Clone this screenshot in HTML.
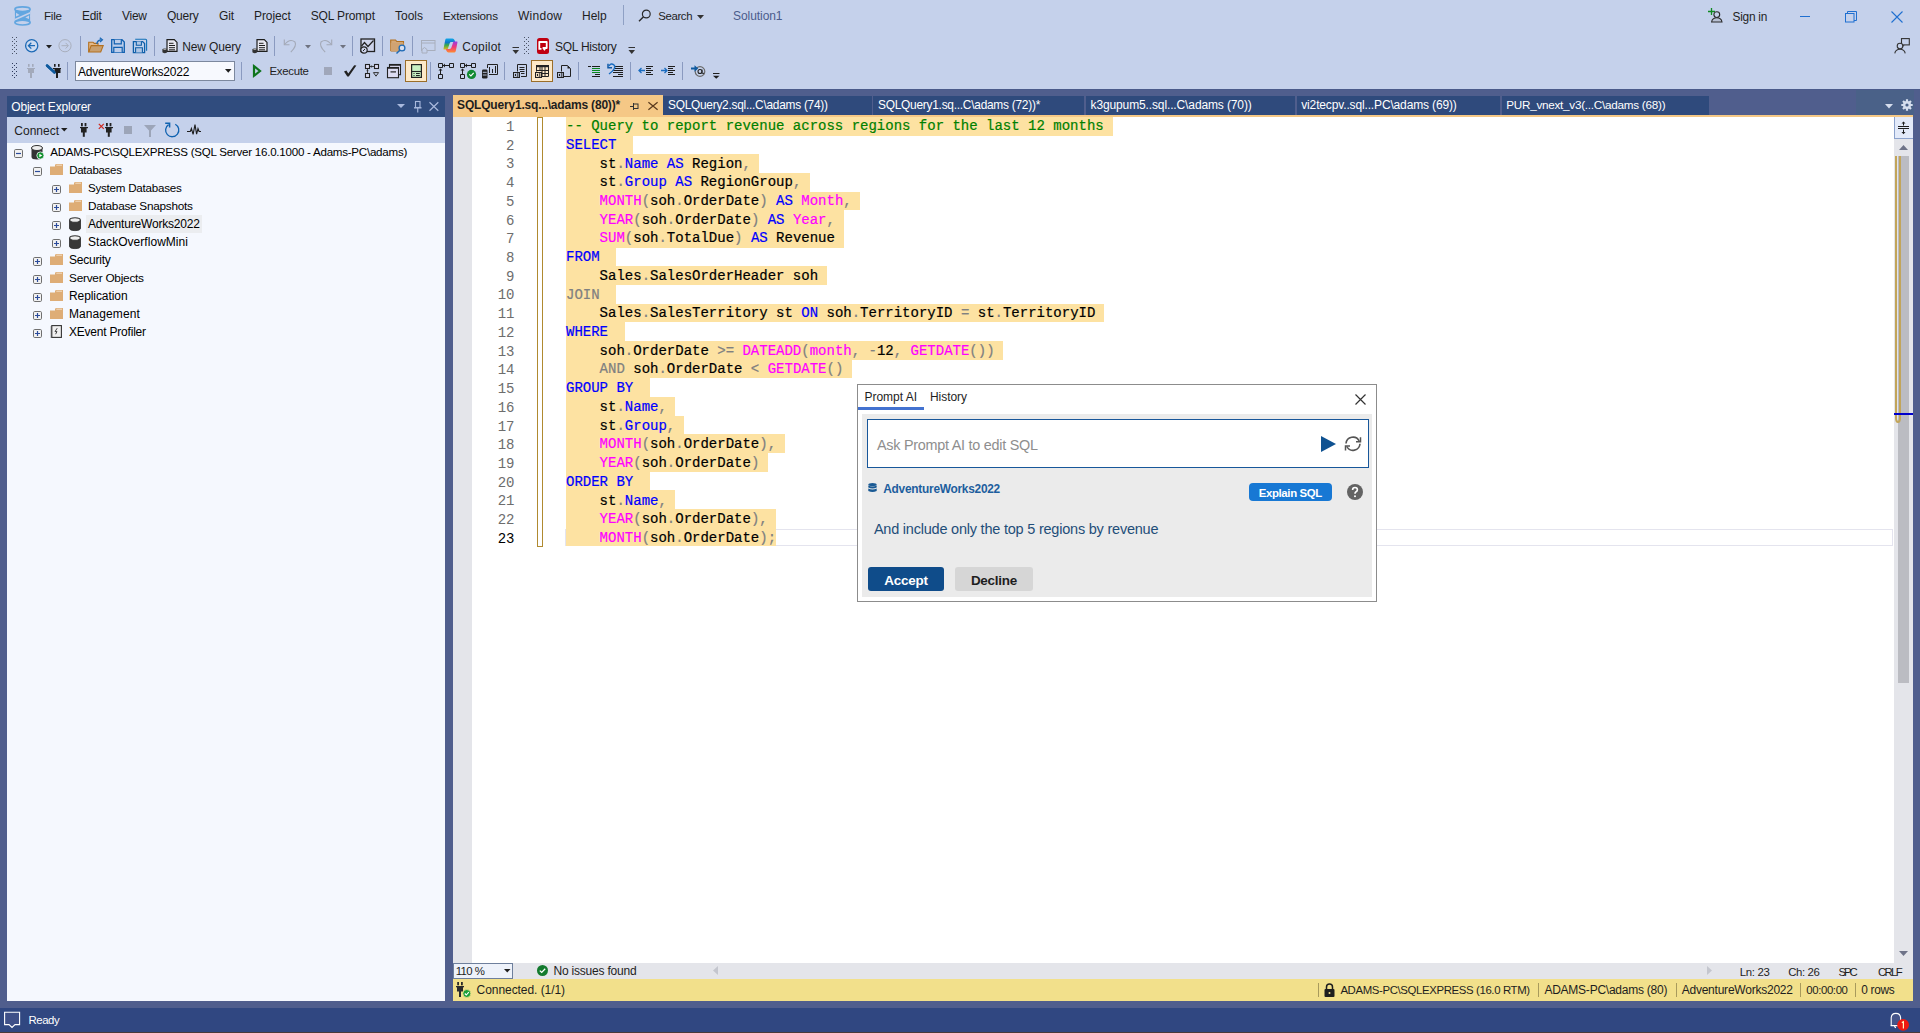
<!DOCTYPE html>
<html><head><meta charset="utf-8">
<style>
*{margin:0;padding:0;box-sizing:border-box}
html,body{width:1920px;height:1033px;overflow:hidden}
body{position:relative;background:#C5D1EB;font-family:"Liberation Sans",sans-serif;font-size:11.3px;color:#1E1E1E}
.a{position:absolute}
.t{position:absolute;white-space:nowrap;height:20px;line-height:20px}
svg{position:absolute;overflow:visible}
.code{position:absolute;left:566px;font-family:"Liberation Mono",monospace;font-size:14px;white-space:pre;-webkit-text-stroke:0.2px currentColor;height:18.69px;line-height:18.69px;color:#000}
.hl{background:#FDE2A2}
.k{color:#0000FF}.f{color:#FF00FF}.o{color:#808080}.c{color:#008000}
.ln{position:absolute;width:40px;left:474.5px;margin-top:0.9px;text-align:right;font-family:"Liberation Mono",monospace;font-size:14px;height:18.69px;line-height:18.69px;color:#6D6D6D}
.row{position:absolute;height:20px;line-height:20px;white-space:nowrap;font-size:11.2px;color:#000}
.sep{position:absolute;width:1px;background:#8A9AC0}
</style></head>
<body>
<!-- frame -->
<div class="a" style="left:0;top:89px;width:1920px;height:1px;background:#4A5A8A"></div>
<div class="a" style="left:0;top:90px;width:1920px;height:918px;background:#505E8D"></div>
<div class="a" style="left:0;top:1008px;width:1920px;height:25px;background:#304781"></div>

<!-- Object Explorer -->
<div class="a" style="left:7px;top:96px;width:438px;height:21px;background:#304C7E"></div>
<div class="a" style="left:7px;top:117px;width:438px;height:26px;background:#C5D1EB"></div>
<div class="a" style="left:7px;top:143px;width:438px;height:858px;background:#F5F8FE"></div>

<!-- Editor -->
<div class="a" style="left:453px;top:115px;width:1460px;height:2px;background:#F5C886"></div>
<div class="a" style="left:453px;top:117px;width:1460px;height:846px;background:#FFFFFF"></div>
<div class="a" style="left:453px;top:117px;width:19px;height:846px;background:#E4E5EA"></div>
<div class="a" style="left:453px;top:963px;width:1460px;height:16px;background:#E4E5EA"></div>
<div class="a" style="left:453px;top:979px;width:1460px;height:22px;background:#F2E08B"></div>

<!-- Tabs -->
<div class="a" style="left:453px;top:95px;width:210px;height:22px;background:#F5C886"></div>
<div class="a" style="left:663px;top:96px;width:209px;height:19px;background:#2F4A7C"></div>
<div class="a" style="left:873px;top:96px;width:211px;height:19px;background:#2F4A7C"></div>
<div class="a" style="left:1086px;top:96px;width:209px;height:19px;background:#2F4A7C"></div>
<div class="a" style="left:1297px;top:96px;width:203px;height:19px;background:#2F4A7C"></div>
<div class="a" style="left:1502px;top:96px;width:207px;height:19px;background:#2F4A7C"></div>
<div class="a" style="left:1856px;top:90px;width:58px;height:25px;background:#4A6188"></div>
<!-- ===== MENU BAR ===== -->
<svg style="left:14px;top:6px" width="17" height="20" viewBox="0 0 17 20"><path d="M0.9 3.2V16.6A7.6 2.4 0 0 0 16.1 16.6V3.2Z" fill="#62A6E0"/><ellipse cx="8.5" cy="3.2" rx="7.6" ry="2.4" fill="#C5D1EB" stroke="#62A6E0" stroke-width="1.7"/><ellipse cx="8.5" cy="16.6" rx="7.6" ry="2.4" fill="#C5D1EB" stroke="#62A6E0" stroke-width="1.7"/><path d="M0.9 12.8L16.1 5.9V7.7L0.9 14.6Z" fill="#C5D1EB"/><path d="M2 6.8L5.6 9L2 10.6Z" fill="#C5D1EB"/><path d="M15 9.6L11.4 11.4L15 12.9Z" fill="#C5D1EB"/><path d="M-0.2 9.2L1.4 10.1L-0.2 11ZM17.2 9.2L15.6 10.1L17.2 11Z" fill="#C5D1EB"/></svg>
<div class="t" style="left:44.00px;top:5.95px;font-size:11.66px;letter-spacing:-0.267px">File</div>
<div class="t" style="left:82.00px;top:5.87px;font-size:11.88px;letter-spacing:-0.250px">Edit</div>
<div class="t" style="left:122.00px;top:5.84px;font-size:11.98px;letter-spacing:-0.267px">View</div>
<div class="t" style="left:167.00px;top:5.83px;font-size:12px;letter-spacing:-0.238px">Query</div>
<div class="t" style="left:219.00px;top:5.83px;font-size:12px;letter-spacing:-0.150px">Git</div>
<div class="t" style="left:254.00px;top:5.83px;font-size:12px;letter-spacing:-0.092px">Project</div>
<div class="t" style="left:310.75px;top:5.83px;font-size:12px;letter-spacing:-0.150px">SQL Prompt</div>
<div class="t" style="left:395.00px;top:5.83px;font-size:12px;letter-spacing:0.000px">Tools</div>
<div class="t" style="left:443.00px;top:5.93px;font-size:11.7px;letter-spacing:-0.244px">Extensions</div>
<div class="t" style="left:518.00px;top:5.83px;font-size:12px;letter-spacing:0.260px">Window</div>
<div class="t" style="left:582.00px;top:5.83px;font-size:12px;letter-spacing:0.017px">Help</div>
<div class="sep" style="left:623px;top:5px;height:20px;background:#8FA0C4"></div>
<svg style="left:638px;top:9px" width="14" height="13" viewBox="0 0 14 13"><circle cx="8.3" cy="5" r="3.9" fill="none" stroke="#2A2A2A" stroke-width="1.2"/><path d="M5.5 7.8L1 12.3" stroke="#2A2A2A" stroke-width="1.4"/></svg>
<div class="t" style="left:658.25px;top:6.03px;font-size:11.4px;letter-spacing:-0.370px">Search</div>
<svg style="left:697px;top:15px" width="7" height="4" viewBox="0 0 7 4"><path d="M0 0H7L3.5 4Z" fill="#333"/></svg>
<div class="t" style="left:733.00px;top:5.83px;font-size:12px;letter-spacing:-0.062px;color:#4B5C8C">Solution1</div>
<svg style="left:1707px;top:7px" width="16" height="16" viewBox="0 0 16 16"><path d="M4.5 1V8M1 4.5H8" stroke="#108A22" stroke-width="1.3"/><circle cx="9.8" cy="7.6" r="2.9" fill="#C5D1EB" stroke="#2A2A2A" stroke-width="1.1"/><path d="M4.6 15Q5.3 10.8 9.8 10.8Q14.3 10.8 15 15Z" fill="#B8C0D4" stroke="#2A2A2A" stroke-width="1.1"/></svg>
<div class="t" style="left:1732.50px;top:6.88px;font-size:11.87px;letter-spacing:-0.250px">Sign in</div>
<div class="a" style="left:1800px;top:16px;width:10px;height:1px;background:#1F6FD0"></div>
<svg style="left:1845px;top:11px" width="12" height="12" viewBox="0 0 12 12"><rect x="0.5" y="2.5" width="8.5" height="8.5" fill="none" stroke="#1F6FD0" stroke-width="1"/><path d="M2.5 2.5V0.5H11.5V9.5H9" fill="none" stroke="#1F6FD0" stroke-width="1"/></svg>
<svg style="left:1891px;top:11px" width="12" height="12" viewBox="0 0 12 12"><path d="M0.5 0.5L11.5 11.5M11.5 0.5L0.5 11.5" stroke="#1F6FD0" stroke-width="1.1"/></svg>

<!-- ===== TOOLBAR 1 ===== -->
<svg style="left:12px;top:37px" width="6" height="17" viewBox="0 0 6 17" fill="#4A5366"><rect x="0" y="0" width="1" height="1"/><rect x="4" y="0" width="1" height="1"/><rect x="2" y="2" width="1" height="1"/><rect x="0" y="4" width="1" height="1"/><rect x="4" y="4" width="1" height="1"/><rect x="2" y="6" width="1" height="1"/><rect x="0" y="8" width="1" height="1"/><rect x="4" y="8" width="1" height="1"/><rect x="2" y="10" width="1" height="1"/><rect x="0" y="12" width="1" height="1"/><rect x="4" y="12" width="1" height="1"/><rect x="2" y="14" width="1" height="1"/><rect x="0" y="16" width="1" height="1"/><rect x="4" y="16" width="1" height="1"/></svg>
<svg style="left:25px;top:39px" width="14" height="14" viewBox="0 0 14 14"><circle cx="6.7" cy="6.7" r="6.1" fill="#CCDAF0" stroke="#1D6AB6" stroke-width="1.3"/><path d="M10 6.7H3.5M6.3 3.8L3.4 6.7L6.3 9.6" fill="none" stroke="#1D6AB6" stroke-width="1.3"/></svg>
<svg style="left:46px;top:45px" width="7" height="4" viewBox="0 0 7 4"><path d="M0 0H6L3 3.5Z" fill="#1E1E1E"/></svg>
<svg style="left:58px;top:39px" width="14" height="14" viewBox="0 0 14 14"><circle cx="7" cy="6.7" r="6.1" fill="none" stroke="#A9AFBD" stroke-width="1"/><path d="M3.5 6.7H10M7.6 3.9L10.4 6.7L7.6 9.5" fill="none" stroke="#A9AFBD" stroke-width="1"/></svg>
<div class="sep" style="left:80px;top:36px;height:20px"></div>
<svg style="left:88px;top:37px" width="16" height="16" viewBox="0 0 16 16"><path d="M0.7 15V5.2H5L6.2 6.4H10V8.5" fill="#E2B98A" stroke="#B3701F" stroke-width="1.1"/><path d="M0.7 15L3.2 8.6H15.2L12.7 15Z" fill="#C8A070" stroke="#B3701F" stroke-width="1.1"/><path d="M8.8 7Q9.5 3 13.5 2.8" fill="none" stroke="#1D6AB6" stroke-width="1.4"/><path d="M11.8 0.8L14.4 2.8L12 5" fill="none" stroke="#1D6AB6" stroke-width="1.3"/></svg>
<svg style="left:111px;top:39px" width="14" height="14" viewBox="0 0 14 14"><path d="M0.7 0.7H11L13.3 3V13.3H0.7Z" fill="#BCCDEA" stroke="#1060B0" stroke-width="1.3"/><path d="M3.3 0.7V4.8H10.3V0.7" fill="#BCCDEA" stroke="#1060B0" stroke-width="1.2"/><path d="M2.8 13.3V8.3H11.2V13.3" fill="#BCCDEA" stroke="#1060B0" stroke-width="1.2"/></svg>
<svg style="left:132px;top:38px" width="16" height="16" viewBox="0 0 16 16"><path d="M3.2 1.3H13.6Q14.6 1.3 14.6 2.3V12.8" fill="none" stroke="#1170B8" stroke-width="1.1"/><path d="M1.4 3.6H10.6L12.6 5.6V14.6H1.4Z" fill="#C2D2EC" stroke="#0E5EA8" stroke-width="1.3"/><path d="M4.3 3.6V7.3H9.4V3.6M3.6 14.6V9.8H10.4V14.6" fill="#B0C7E6" stroke="#0E5EA8" stroke-width="1.1"/></svg>
<div class="sep" style="left:154px;top:36px;height:20px"></div>
<svg style="left:162px;top:39px" width="16" height="15" viewBox="0 0 16 15"><path d="M5 0.7H12.3L15 3.4V12.3H5Z" fill="#E8E8F0" stroke="#1E1E1E" stroke-width="1.2"/><path d="M7 4.3H11.5M7 6.5H13M7 8.7H13M7 10.8H13" stroke="#1E1E1E" stroke-width="1"/><ellipse cx="2.8" cy="10.6" rx="2.4" ry="1.2" fill="#333"/><path d="M0.4 10.6V13.3Q2.8 15 5.2 13.3V10.6" fill="#333"/><ellipse cx="2.8" cy="10.3" rx="1.6" ry="0.6" fill="#AAA"/></svg>
<div class="t" style="left:182.25px;top:36.63px;font-size:12px;letter-spacing:-0.156px">New Query</div>
<svg style="left:252px;top:39px" width="16" height="15" viewBox="0 0 16 15"><path d="M5 0.7H12.3L15 3.4V12.3H5Z" fill="#E8E8F0" stroke="#1E1E1E" stroke-width="1.2"/><path d="M7 4.3H11.5M7 6.5H13M7 8.7H13M7 10.8H13" stroke="#1E1E1E" stroke-width="1"/><ellipse cx="2.8" cy="10.6" rx="2.4" ry="1.2" fill="#333"/><path d="M0.4 10.6V13.3Q2.8 15 5.2 13.3V10.6" fill="#333"/><ellipse cx="2.8" cy="10.3" rx="1.6" ry="0.6" fill="#AAA"/></svg>
<div class="sep" style="left:274px;top:36px;height:20px"></div>
<svg style="left:283px;top:38px" width="14" height="15" viewBox="0 0 14 15"><path d="M1.5 6.5Q7 0 12 4Q14 8 7.8 14.2" fill="none" stroke="#A3A9B7" stroke-width="1.1"/><path d="M1.3 1.5V6.8H6.5" fill="none" stroke="#A3A9B7" stroke-width="1.1"/></svg>
<svg style="left:305px;top:45px" width="7" height="4" viewBox="0 0 7 4"><path d="M0 0H6L3 3.5Z" fill="#6F7380"/></svg>
<svg style="left:319px;top:38px" width="14" height="15" viewBox="0 0 14 15"><path d="M12.5 6.5Q7 0 2 4Q0 8 6.2 14.2" fill="none" stroke="#A3A9B7" stroke-width="1.1"/><path d="M12.7 1.5V6.8H7.5" fill="none" stroke="#A3A9B7" stroke-width="1.1"/></svg>
<svg style="left:340px;top:45px" width="7" height="4" viewBox="0 0 7 4"><path d="M0 0H6L3 3.5Z" fill="#6F7380"/></svg>
<div class="sep" style="left:352px;top:36px;height:20px"></div>
<svg style="left:360px;top:38px" width="16" height="16" viewBox="0 0 16 16"><rect x="1" y="1" width="13.5" height="12.5" fill="#CDD3EA" stroke="#222" stroke-width="1.3"/><path d="M1.5 8L4.5 4.5L8 8.5L13.5 2.5" fill="none" stroke="#222" stroke-width="1.2"/><circle cx="4" cy="12" r="3.2" fill="#CDD3EA" stroke="#222" stroke-width="1.2"/><path d="M3 13L5 11" stroke="#222" stroke-width="1"/></svg>
<div class="sep" style="left:382px;top:36px;height:20px"></div>
<svg style="left:390px;top:39px" width="17" height="15" viewBox="0 0 17 15"><path d="M0.7 12V1H5.5L6.8 2.5H13.5V8" fill="#D4A877" stroke="#B3701F" stroke-width="1.1"/><path d="M0.7 12H9V4.5H13.5" fill="#D4A877" stroke="#B3701F" stroke-width="1.1"/><rect x="0.7" y="3.8" width="12.8" height="8.2" fill="#D0A372"/><circle cx="12" cy="9" r="2.9" fill="#D8DEEE" stroke="#1D6AB6" stroke-width="1.3"/><path d="M9.8 11.3L6.5 14.5" stroke="#1D6AB6" stroke-width="1.5"/></svg>
<div class="sep" style="left:412px;top:36px;height:20px"></div>
<svg style="left:421px;top:40px" width="15" height="14" viewBox="0 0 15 14"><rect x="0.5" y="0.5" width="13.5" height="10" fill="none" stroke="#A8AEBC" stroke-width="1"/><path d="M0.5 3H14" stroke="#A8AEBC" stroke-width="1"/><path d="M1 13V9.5L3.5 7.5L6 9.5V13Z" fill="#C5D1EB" stroke="#A8AEBC" stroke-width="1"/></svg>
<svg style="left:443px;top:38px" width="15" height="15" viewBox="0 0 15 15"><defs><linearGradient id="cpa" x1="0" y1="0" x2="0" y2="1"><stop offset="0" stop-color="#11A6E8"/><stop offset="0.35" stop-color="#0E78C8"/><stop offset="0.6" stop-color="#3AAA48"/><stop offset="1" stop-color="#E8B820"/></linearGradient><linearGradient id="cpb" x1="0" y1="0" x2="0" y2="1"><stop offset="0" stop-color="#9C3CE0"/><stop offset="0.5" stop-color="#F03A78"/><stop offset="1" stop-color="#FF8A30"/></linearGradient></defs><path d="M3.5 0.6H9.5Q11 0.6 11.6 2.2L12.2 4H8.2Q7 4 6.6 5.4L4.6 11.6H1.2Q0.2 11.6 0.6 10.4L2.2 2Q2.6 0.6 3.5 0.6Z" fill="url(#cpa)"/><path d="M11.5 14.4H5.5Q4 14.4 3.4 12.8L2.8 11H6.8Q8 11 8.4 9.6L10.4 3.6H13.8Q14.8 3.6 14.4 4.8L12.8 13Q12.4 14.4 11.5 14.4Z" fill="url(#cpb)"/></svg>
<div class="t" style="left:462.30px;top:36.73px;font-size:12px;letter-spacing:0.217px">Copilot</div>
<svg style="left:512px;top:47px" width="8" height="8" viewBox="0 0 8 8"><path d="M0.5 0.5H7" stroke="#333" stroke-width="1"/><path d="M0.5 3H7L3.75 7Z" fill="#333"/></svg>
<svg style="left:524px;top:37px" width="6" height="17" viewBox="0 0 6 17" fill="#4A5366"><rect x="0" y="0" width="1" height="1"/><rect x="4" y="0" width="1" height="1"/><rect x="2" y="2" width="1" height="1"/><rect x="0" y="4" width="1" height="1"/><rect x="4" y="4" width="1" height="1"/><rect x="2" y="6" width="1" height="1"/><rect x="0" y="8" width="1" height="1"/><rect x="4" y="8" width="1" height="1"/><rect x="2" y="10" width="1" height="1"/><rect x="0" y="12" width="1" height="1"/><rect x="4" y="12" width="1" height="1"/><rect x="2" y="14" width="1" height="1"/><rect x="0" y="16" width="1" height="1"/><rect x="4" y="16" width="1" height="1"/></svg>
<svg style="left:537px;top:38px" width="12" height="16" viewBox="0 0 12 16"><rect x="0" y="0" width="12" height="16" rx="2.5" fill="#C00010"/><path d="M2.3 4H9.7V10H6.3L8 12.3" fill="none" stroke="#fff" stroke-width="1.8" stroke-linejoin="round"/><path d="M2.3 3.2V10.8H4.5" fill="none" stroke="#fff" stroke-width="1.8"/></svg>
<div class="t" style="left:555.00px;top:36.73px;font-size:12px;letter-spacing:-0.250px">SQL History</div>
<svg style="left:628px;top:47px" width="8" height="8" viewBox="0 0 8 8"><path d="M0.5 0.5H7" stroke="#333" stroke-width="1"/><path d="M0.5 3H7L3.75 7Z" fill="#333"/></svg>
<svg style="left:1894px;top:38px" width="16" height="16" viewBox="0 0 16 16"><rect x="7.5" y="0.6" width="7.8" height="6.3" fill="none" stroke="#333" stroke-width="1.1"/><path d="M10 6.9L9.2 8.5" stroke="#333" stroke-width="1"/><circle cx="6" cy="8" r="2.8" fill="#C5D1EB" stroke="#333" stroke-width="1.1"/><path d="M0.8 15.3Q1.5 11.2 6 11.2Q10.5 11.2 11.2 15.3" fill="none" stroke="#333" stroke-width="1.1"/></svg>

<!-- ===== TOOLBAR 2 ===== -->
<svg style="left:12px;top:63px" width="6" height="15" viewBox="0 0 6 15" fill="#2D3A5C"><rect x="0" y="0" width="1" height="1"/><rect x="4" y="0" width="1" height="1"/><rect x="2" y="2" width="1" height="1"/><rect x="0" y="4" width="1" height="1"/><rect x="4" y="4" width="1" height="1"/><rect x="2" y="6" width="1" height="1"/><rect x="0" y="8" width="1" height="1"/><rect x="4" y="8" width="1" height="1"/><rect x="2" y="10" width="1" height="1"/><rect x="0" y="12" width="1" height="1"/><rect x="4" y="12" width="1" height="1"/><rect x="2" y="14" width="1" height="1"/></svg>
<svg style="left:27px;top:64px" width="8" height="14" viewBox="0 0 8 14" fill="#A3AABB"><rect x="1" y="0" width="1.6" height="2.8"/><rect x="5" y="0" width="1.6" height="2.8"/><rect x="0" y="4" width="8" height="1"/><rect x="1" y="4" width="6" height="5"/><rect x="3" y="9" width="2" height="5"/></svg>
<svg style="left:46px;top:64px" width="15" height="14" viewBox="0 0 15 14"><path d="M1 1.5L8.6 8.5" stroke="#0F5A9E" stroke-width="2.4" stroke-linecap="round"/><g fill="#1E1E1E"><rect x="8" y="0" width="1.6" height="2.8"/><rect x="12" y="0" width="1.6" height="2.8"/><rect x="7" y="4" width="8" height="1"/><rect x="8.5" y="4" width="6" height="5"/><rect x="10" y="9" width="2" height="5"/></g><path d="M1 1.5L8.6 8.5" stroke="#0F5A9E" stroke-width="2.4" stroke-linecap="round"/></svg>
<div class="sep" style="left:67px;top:62px;height:18px"></div>
<div class="a" style="left:75px;top:61px;width:160px;height:20px;background:#F7F9FE;border:1px solid #7C889E"></div>
<div class="t" style="left:78.00px;top:61.63px;font-size:12px;letter-spacing:-0.224px;color:#000">AdventureWorks2022</div>
<svg style="left:225px;top:69px" width="7" height="4" viewBox="0 0 7 4"><path d="M0 0H6.5L3.25 3.8Z" fill="#1E1E1E"/></svg>
<div class="sep" style="left:241px;top:62px;height:18px"></div>
<svg style="left:252px;top:64px" width="10" height="14" viewBox="0 0 10 14"><path d="M2 2.2L8 7L2 11.8Z" fill="none" stroke="#0E741C" stroke-width="2.2" stroke-linejoin="miter"/></svg>
<div class="t" style="left:269.40px;top:60.83px;font-size:11.4px;letter-spacing:-0.267px">Execute</div>
<div class="a" style="left:324px;top:67px;width:8px;height:8px;background:#A0A7BA"></div>
<svg style="left:343px;top:64px" width="14" height="14" viewBox="0 0 14 14"><path d="M1 7.4L3.4 6.4L5.3 9.6L11.2 1.2L13.4 1.4L5.8 12.6L4.3 12.6Z" fill="#222"/></svg>
<svg style="left:364px;top:63px" width="16" height="16" viewBox="0 0 16 16"><g fill="#DCDCF2" stroke="#222" stroke-width="1.1"><rect x="1.5" y="1.5" width="4" height="4"/><rect x="10.5" y="1.5" width="4" height="4"/><rect x="1.5" y="10.5" width="4" height="4"/></g><path d="M6 3.5H10M3.5 6V10" stroke="#333" stroke-width="0.9"/><circle cx="7.5" cy="3.5" r="0.9" fill="#333"/><circle cx="3.5" cy="7.6" r="0.9" fill="#333"/><path d="M9.4 9.6H14.6L12 13.2Z" fill="none" stroke="#333" stroke-width="1"/></svg>
<svg style="left:386px;top:63px" width="16" height="16" viewBox="0 0 16 16"><g fill="#DCDCF2" stroke="#222" stroke-width="1.1"><rect x="3.5" y="1.5" width="11" height="10.2"/><rect x="1.5" y="4.5" width="11" height="10.2"/></g><path d="M3.5 2H14.5M1.5 5H12.5" stroke="#222" stroke-width="1.6"/><path d="M4.5 8.9H10" stroke="#222" stroke-width="1.2"/></svg>
<div class="a" style="left:405px;top:60px;width:22px;height:22px;background:#FDE9C8;border:1px solid #9A6E2A"></div>
<svg style="left:411px;top:64px" width="11" height="14" viewBox="0 0 11 14"><rect x="0.6" y="0.6" width="9.8" height="12.8" fill="#C9F0C3" stroke="#222" stroke-width="1.2"/><path d="M0.6 7.5H10.4" stroke="#222" stroke-width="1.1"/><path d="M2.5 9.5H3.5M5 9.5H8.8M2.5 11.5H3.5M5 11.5H8.8" stroke="#222" stroke-width="1"/></svg>
<div class="sep" style="left:430px;top:62px;height:18px"></div>
<svg style="left:436px;top:62px" width="20" height="18" viewBox="0 0 20 18"><path d="M2.5 1.5h4v4h-4zM13.5 1.5h4v4h-4zM2.5 12.5h4v4h-4z" fill="none" stroke="#1E1E1E" stroke-width="1"/><path d="M7 3.5H13M4.5 7V12" stroke="#1E1E1E" stroke-width="1"/><path d="M7 3.5L9 1.5V5.5Z M4.5 6.5L2.5 8.5H6.5Z" fill="#1E1E1E"/></svg>
<svg style="left:458px;top:62px" width="20" height="18" viewBox="0 0 20 18"><path d="M2.5 1.5h4v4h-4zM13.5 1.5h4v4h-4zM2.5 12.5h4v4h-4z" fill="none" stroke="#1E1E1E" stroke-width="1"/><path d="M7 3.5H13M4.5 7V12" stroke="#1E1E1E" stroke-width="1"/><path d="M7 3.5L9 1.5V5.5Z M4.5 6.5L2.5 8.5H6.5Z" fill="#1E1E1E"/><circle cx="13.5" cy="12.4" r="4.6" fill="#128A32"/><path d="M11.3 12.4L12.9 13.9L15.7 10.9" fill="none" stroke="#fff" stroke-width="1.2"/></svg>

<div class="sep" style="left:504px;top:62px;height:18px"></div>

<div class="a" style="left:531px;top:60px;width:22px;height:22px;background:#FDE9C8;border:1px solid #9A6E2A"></div>
<svg style="left:478px;top:60px" width="98" height="22" viewBox="0 0 98 22">
<path d="M9.5 8V4.5H19.5V14.5H11" fill="none" stroke="#222" stroke-width="1"/><path d="M11.5 7V13M14.5 9V13M17.5 6V13" stroke="#222" stroke-width="1"/>
<rect x="4" y="9.5" width="5.5" height="9" rx="1.2" fill="#222"/><path d="M4.8 12.3H8.7M4.8 15H8.7" stroke="#C5D1EB" stroke-width="0.9"/>
<path d="M39.5 11.5V4.5H48.5V16.5H43" fill="none" stroke="#222" stroke-width="1"/><path d="M41.5 7.5H46.5M41.5 9.5H46.5M42 11.5H46.5M43 13.5H46.5" stroke="#222" stroke-width="1"/>
<rect x="35" y="12" width="7" height="6" fill="#222"/><rect x="36.5" y="13.5" width="2" height="3" fill="none" stroke="#C5D1EB" stroke-width="0.9"/><path d="M40.2 13V17" stroke="#C5D1EB" stroke-width="1"/>
<rect x="58" y="5" width="13" height="2.2" fill="#222"/><path d="M58.5 7V11.5M70.5 7V16.5H64M64 7V16.5M58.5 10.5H70.5M64 13.5H70.5M62 7V10.5M67 7V16.5" fill="none" stroke="#222" stroke-width="1"/>
<rect x="57" y="12" width="7" height="6" fill="#222"/><rect x="58.5" y="13.5" width="2" height="3" fill="none" stroke="#FDE9C8" stroke-width="0.9"/><path d="M62.2 13V17" stroke="#FDE9C8" stroke-width="1"/>
<path d="M83.5 11.5V5.5H89.5L92.5 8.5V16.5H86" fill="none" stroke="#222" stroke-width="1"/><path d="M89.5 5.5V8.5H92.5Z" fill="#222"/>
<rect x="79" y="12" width="7" height="6" fill="#222"/><rect x="80.5" y="13.5" width="2" height="3" fill="none" stroke="#C5D1EB" stroke-width="0.9"/><path d="M84.2 13V17" stroke="#C5D1EB" stroke-width="1"/>
</svg>

<div class="sep" style="left:578px;top:62px;height:18px"></div>
<svg style="left:584px;top:60px" width="40" height="20" viewBox="0 0 40 20"><path d="M4 6.5H7M8 6.5H16M11 14.5H16M8 16.5H16" stroke="#1E1E1E" stroke-width="1"/><path d="M8 8.5H16M8 10.5H16M8 12.5H16" stroke="#0A8A1E" stroke-width="1"/><path d="M31 6.5H39M31 8.5H39M29 10.5H39M29 12.5H39M34 14.5H39M29 16.5H39" stroke="#1E1E1E" stroke-width="1"/><path d="M25 14Q33 8 30 5Q27 2.5 25 6" fill="none" stroke="#1A6CC0" stroke-width="1.4"/><path d="M24 3.8V7.8H28" fill="none" stroke="#0F5AA8" stroke-width="1.5"/></svg>

<div class="sep" style="left:630px;top:62px;height:18px"></div>
<svg style="left:636px;top:60px" width="80" height="20" viewBox="0 0 80 20"><path d="M10 6.5H17M10 8.5H15M10 10.5H17M10 12.5H15M10 14.5H17" stroke="#1E1E1E" stroke-width="1"/><path d="M9 10.5H3.5M5.5 8L3 10.5L5.5 13" fill="none" stroke="#1A6CC0" stroke-width="1.3"/><path d="M32 6.5H39M32 8.5H37M32 10.5H39M32 12.5H37M32 14.5H39" stroke="#1E1E1E" stroke-width="1"/><path d="M25 10.5H30.5M28.5 8L31 10.5L28.5 13" fill="none" stroke="#1A6CC0" stroke-width="1.3"/></svg>

<div class="sep" style="left:682px;top:62px;height:18px"></div>
<svg style="left:690px;top:64px" width="17" height="14" viewBox="0 0 17 14"><circle cx="10" cy="7.5" r="4.8" fill="none" stroke="#6A6A6A" stroke-width="1.2"/><circle cx="10" cy="7.5" r="2" fill="none" stroke="#222" stroke-width="1.1"/><path d="M12 5.5V9Q12.5 10 14 9.2" fill="none" stroke="#222" stroke-width="1"/><path d="M1 4.5H6" stroke="#0F5AA0" stroke-width="2"/><path d="M4.5 1.2L8.2 4.5L4.5 7.8Z" fill="#0F5AA0"/></svg>
<svg style="left:713px;top:73px" width="7" height="6" viewBox="0 0 7 6"><path d="M0 0.5H6.5" stroke="#1E1E1E" stroke-width="1"/><path d="M0 2.8H6.5L3.25 5.8Z" fill="#1E1E1E"/></svg>

<!-- ===== OBJECT EXPLORER ===== -->
<div class="t" style="left:11.30px;top:97.23px;font-size:12px;letter-spacing:-0.207px;color:#FFFFFF">Object Explorer</div>
<svg style="left:397px;top:104px" width="8" height="4" viewBox="0 0 8 4"><path d="M0 0H8L4 4Z" fill="#A9B9DD"/></svg>
<svg style="left:414px;top:101px" width="8" height="12" viewBox="0 0 8 12" fill="none" stroke="#A9B9DD"><rect x="1.5" y="0.5" width="4.5" height="6" stroke-width="1.1"/><path d="M0 6.8H7.5" stroke-width="1.4"/><path d="M3.75 7V11.5" stroke-width="1.1"/></svg>
<svg style="left:429px;top:102px" width="10" height="9" viewBox="0 0 10 9"><path d="M0.5 0.3L9.3 8.7M9.3 0.3L0.5 8.7" stroke="#A9B9DD" stroke-width="1.2"/></svg>
<div class="t" style="left:14.30px;top:121.33px;font-size:12px;letter-spacing:0.017px">Connect</div>
<svg style="left:61px;top:128px" width="7" height="4" viewBox="0 0 7 4"><path d="M0 0H6.5L3.25 3.5Z" fill="#1E1E1E"/></svg>
<svg style="left:80px;top:123px" width="8" height="14" viewBox="0 0 8 14"><g fill="#222"><rect x="1" y="0" width="1.8" height="3.3"/><rect x="4.6" y="0" width="1.8" height="3.3"/><rect x="0" y="4" width="8" height="1.2"/><rect x="1" y="4" width="5.6" height="5.5"/><rect x="2.8" y="9" width="2" height="4.8"/></g></svg>
<svg style="left:98px;top:123px" width="15" height="14" viewBox="0 0 15 14"><path d="M0.8 0.8L5.8 5.8M5.8 0.8L0.8 5.8" stroke="#D0281E" stroke-width="1.2"/><g transform="translate(7,0)"><g fill="#222"><rect x="1" y="0" width="1.8" height="3.3"/><rect x="4.6" y="0" width="1.8" height="3.3"/><rect x="0" y="4" width="8" height="1.2"/><rect x="1" y="4" width="5.6" height="5.5"/><rect x="2.8" y="9" width="2" height="4.8"/></g></g></svg>
<div class="a" style="left:124px;top:126px;width:8px;height:8px;background:#9CA5B8"></div>
<svg style="left:144px;top:125px" width="12" height="12" viewBox="0 0 12 12"><path d="M0 0H12L7 5.5V12H5V5.5Z" fill="#9CA5B8"/></svg>
<svg style="left:164px;top:122px" width="16" height="16" viewBox="0 0 16 16"><path d="M4.6 2.6A6.6 6.6 0 1 0 11.3 2.3" fill="none" stroke="#0F62B0" stroke-width="1.3"/><path d="M1.2 1.3H5.6V5.6" fill="none" stroke="#0F62B0" stroke-width="1.5"/></svg>
<svg style="left:186px;top:123px" width="16" height="13" viewBox="0 0 16 13"><path d="M1 8.5H4.3L5.4 5.6L7.1 11.4L9 1.6L10.6 11.2L12 5.6L13.1 8.5H15" fill="none" stroke="#1E1E1E" stroke-width="1.1"/></svg>
<svg style="left:14px;top:149px" width="9" height="9" viewBox="0 0 9 9"><defs></defs><rect x="0.5" y="0.5" width="8" height="8" rx="1.2" fill="#F2F2F2" stroke="#6F6F6F" stroke-width="1"/><path d="M2 4.5H7" stroke="#2C4C9C" stroke-width="1.2"/></svg>
<svg style="left:31px;top:145px" width="13" height="15" viewBox="0 0 13 15"><path d="M0.5 3V12Q0.5 14.5 6 14.5Q11.5 14.5 11.5 12V3Z" fill="#333"/><ellipse cx="6" cy="3" rx="5.5" ry="2.5" fill="#EEE" stroke="#333" stroke-width="1"/><circle cx="9.4" cy="10.5" r="3.6" fill="#12902E" stroke="#F5F8FE" stroke-width="0.8"/><path d="M8.3 8.7L11.3 10.5L8.3 12.3Z" fill="#fff"/></svg>
<div class="t" style="left:50.20px;top:141.67px;font-size:11.59px;letter-spacing:-0.248px;color:#000">ADAMS-PC\SQLEXPRESS (SQL Server 16.0.1000 - Adams-PC\adams)</div>
<svg style="left:33px;top:167px" width="9" height="9" viewBox="0 0 9 9"><defs></defs><rect x="0.5" y="0.5" width="8" height="8" rx="1.2" fill="#F2F2F2" stroke="#6F6F6F" stroke-width="1"/><path d="M2 4.5H7" stroke="#2C4C9C" stroke-width="1.2"/></svg>
<svg style="left:50px;top:164px" width="13" height="11" viewBox="0 0 13 11"><path d="M0 2.5H5V1L5.8 0H13V11H0Z" fill="#DEAD76"/><path d="M6.3 1.2H12" stroke="#F8EBDB" stroke-width="0.8"/></svg>
<div class="t" style="left:69.20px;top:159.71px;font-size:11.46px;letter-spacing:-0.250px;color:#000">Databases</div>
<svg style="left:52px;top:185px" width="9" height="9" viewBox="0 0 9 9"><defs></defs><rect x="0.5" y="0.5" width="8" height="8" rx="1.2" fill="#F2F2F2" stroke="#6F6F6F" stroke-width="1"/><path d="M2 4.5H7M4.5 2V7" stroke="#2C4C9C" stroke-width="1.2"/></svg>
<svg style="left:69px;top:182px" width="13" height="11" viewBox="0 0 13 11"><path d="M0 2.5H5V1L5.8 0H13V11H0Z" fill="#DEAD76"/><path d="M6.3 1.2H12" stroke="#F8EBDB" stroke-width="0.8"/></svg>
<div class="t" style="left:88.00px;top:177.66px;font-size:11.61px;letter-spacing:-0.247px;color:#000">System Databases</div>
<svg style="left:52px;top:203px" width="9" height="9" viewBox="0 0 9 9"><defs></defs><rect x="0.5" y="0.5" width="8" height="8" rx="1.2" fill="#F2F2F2" stroke="#6F6F6F" stroke-width="1"/><path d="M2 4.5H7M4.5 2V7" stroke="#2C4C9C" stroke-width="1.2"/></svg>
<svg style="left:69px;top:200px" width="13" height="11" viewBox="0 0 13 11"><path d="M0 2.5H5V1L5.8 0H13V11H0Z" fill="#DEAD76"/><path d="M6.3 1.2H12" stroke="#F8EBDB" stroke-width="0.8"/></svg>
<div class="t" style="left:88.00px;top:195.61px;font-size:11.77px;letter-spacing:-0.253px;color:#000">Database Snapshots</div>
<div class="a" style="left:86px;top:215px;width:116px;height:18px;background:#EBEDF0;top:215px"></div>
<svg style="left:52px;top:221px" width="9" height="9" viewBox="0 0 9 9"><defs></defs><rect x="0.5" y="0.5" width="8" height="8" rx="1.2" fill="#F2F2F2" stroke="#6F6F6F" stroke-width="1"/><path d="M2 4.5H7M4.5 2V7" stroke="#2C4C9C" stroke-width="1.2"/></svg>
<svg style="left:69px;top:217px" width="12" height="14" viewBox="0 0 12 14"><path d="M0.5 3V11Q0.5 13.6 6 13.6Q11.5 13.6 11.5 11V3Z" fill="#383838" stroke="#2A2A2A" stroke-width="0.8"/><ellipse cx="6" cy="3" rx="5.3" ry="2.3" fill="#EEE" stroke="#333" stroke-width="1.1"/></svg>
<div class="t" style="left:88.00px;top:213.53px;font-size:12px;letter-spacing:-0.188px;color:#000">AdventureWorks2022</div>
<svg style="left:52px;top:239px" width="9" height="9" viewBox="0 0 9 9"><defs></defs><rect x="0.5" y="0.5" width="8" height="8" rx="1.2" fill="#F2F2F2" stroke="#6F6F6F" stroke-width="1"/><path d="M2 4.5H7M4.5 2V7" stroke="#2C4C9C" stroke-width="1.2"/></svg>
<svg style="left:69px;top:235px" width="12" height="14" viewBox="0 0 12 14"><path d="M0.5 3V11Q0.5 13.6 6 13.6Q11.5 13.6 11.5 11V3Z" fill="#383838" stroke="#2A2A2A" stroke-width="0.8"/><ellipse cx="6" cy="3" rx="5.3" ry="2.3" fill="#EEE" stroke="#333" stroke-width="1.1"/></svg>
<div class="t" style="left:88.00px;top:231.53px;font-size:12px;letter-spacing:0.037px;color:#000">StackOverflowMini</div>
<svg style="left:33px;top:257px" width="9" height="9" viewBox="0 0 9 9"><defs></defs><rect x="0.5" y="0.5" width="8" height="8" rx="1.2" fill="#F2F2F2" stroke="#6F6F6F" stroke-width="1"/><path d="M2 4.5H7M4.5 2V7" stroke="#2C4C9C" stroke-width="1.2"/></svg>
<svg style="left:50px;top:254px" width="13" height="11" viewBox="0 0 13 11"><path d="M0 2.5H5V1L5.8 0H13V11H0Z" fill="#DEAD76"/><path d="M6.3 1.2H12" stroke="#F8EBDB" stroke-width="0.8"/></svg>
<div class="t" style="left:69.00px;top:249.53px;font-size:12px;letter-spacing:-0.229px;color:#000">Security</div>
<svg style="left:33px;top:275px" width="9" height="9" viewBox="0 0 9 9"><defs></defs><rect x="0.5" y="0.5" width="8" height="8" rx="1.2" fill="#F2F2F2" stroke="#6F6F6F" stroke-width="1"/><path d="M2 4.5H7M4.5 2V7" stroke="#2C4C9C" stroke-width="1.2"/></svg>
<svg style="left:50px;top:272px" width="13" height="11" viewBox="0 0 13 11"><path d="M0 2.5H5V1L5.8 0H13V11H0Z" fill="#DEAD76"/><path d="M6.3 1.2H12" stroke="#F8EBDB" stroke-width="0.8"/></svg>
<div class="t" style="left:69.00px;top:267.59px;font-size:11.83px;letter-spacing:-0.246px;color:#000">Server Objects</div>
<svg style="left:33px;top:293px" width="9" height="9" viewBox="0 0 9 9"><defs></defs><rect x="0.5" y="0.5" width="8" height="8" rx="1.2" fill="#F2F2F2" stroke="#6F6F6F" stroke-width="1"/><path d="M2 4.5H7M4.5 2V7" stroke="#2C4C9C" stroke-width="1.2"/></svg>
<svg style="left:50px;top:290px" width="13" height="11" viewBox="0 0 13 11"><path d="M0 2.5H5V1L5.8 0H13V11H0Z" fill="#DEAD76"/><path d="M6.3 1.2H12" stroke="#F8EBDB" stroke-width="0.8"/></svg>
<div class="t" style="left:69.00px;top:285.53px;font-size:12px;letter-spacing:-0.080px;color:#000">Replication</div>
<svg style="left:33px;top:311px" width="9" height="9" viewBox="0 0 9 9"><defs></defs><rect x="0.5" y="0.5" width="8" height="8" rx="1.2" fill="#F2F2F2" stroke="#6F6F6F" stroke-width="1"/><path d="M2 4.5H7M4.5 2V7" stroke="#2C4C9C" stroke-width="1.2"/></svg>
<svg style="left:50px;top:308px" width="13" height="11" viewBox="0 0 13 11"><path d="M0 2.5H5V1L5.8 0H13V11H0Z" fill="#DEAD76"/><path d="M6.3 1.2H12" stroke="#F8EBDB" stroke-width="0.8"/></svg>
<div class="t" style="left:69.00px;top:303.53px;font-size:12px;letter-spacing:0.078px;color:#000">Management</div>
<svg style="left:33px;top:329px" width="9" height="9" viewBox="0 0 9 9"><defs></defs><rect x="0.5" y="0.5" width="8" height="8" rx="1.2" fill="#F2F2F2" stroke="#6F6F6F" stroke-width="1"/><path d="M2 4.5H7M4.5 2V7" stroke="#2C4C9C" stroke-width="1.2"/></svg>
<svg style="left:50px;top:325px" width="12" height="13" viewBox="0 0 12 13"><rect x="1.8" y="0.6" width="9.6" height="11.8" fill="#F0F0F0" stroke="#333" stroke-width="1.1"/><path d="M0.5 2H1.8M0.5 4H1.8M0.5 6H1.8M0.5 8H1.8M0.5 10H1.8M0.5 12H1.8" stroke="#333" stroke-width="0.8"/><path d="M7.2 3.2L5 6.6H7L5.6 9.2" fill="none" stroke="#333" stroke-width="0.9"/></svg>
<div class="t" style="left:69.00px;top:321.53px;font-size:12px;letter-spacing:-0.214px;color:#000">XEvent Profiler</div>
<!-- ===== EDITOR CODE ===== -->
<div class="a" style="left:565px;top:528.5px;width:1328px;height:17.5px;border:1.5px solid #E4E4EE"></div>
<div class="a" style="left:537px;top:117px;width:6px;height:429.87px;border:1px solid #B08A30;border-top-width:1px"></div>
<div class="a hl" style="left:566px;top:117.00px;width:546.6px;height:18.70px"></div>
<div class="a hl" style="left:566px;top:135.67px;width:67.3px;height:18.70px"></div>
<div class="a hl" style="left:566px;top:154.34px;width:193.4px;height:18.70px"></div>
<div class="a hl" style="left:566px;top:173.01px;width:243.9px;height:18.70px"></div>
<div class="a hl" style="left:566px;top:191.68px;width:294.4px;height:18.70px"></div>
<div class="a hl" style="left:566px;top:210.35px;width:277.5px;height:18.70px"></div>
<div class="a hl" style="left:566px;top:229.02px;width:277.5px;height:18.70px"></div>
<div class="a hl" style="left:566px;top:247.69px;width:50.4px;height:18.70px"></div>
<div class="a hl" style="left:566px;top:266.36px;width:260.7px;height:18.70px"></div>
<div class="a hl" style="left:566px;top:285.03px;width:50.4px;height:18.70px"></div>
<div class="a hl" style="left:566px;top:303.70px;width:538.2px;height:18.70px"></div>
<div class="a hl" style="left:566px;top:322.37px;width:58.9px;height:18.70px"></div>
<div class="a hl" style="left:566px;top:341.04px;width:437.3px;height:18.70px"></div>
<div class="a hl" style="left:566px;top:359.71px;width:285.9px;height:18.70px"></div>
<div class="a hl" style="left:566px;top:378.38px;width:84.1px;height:18.70px"></div>
<div class="a hl" style="left:566px;top:397.05px;width:109.3px;height:18.70px"></div>
<div class="a hl" style="left:566px;top:415.72px;width:117.7px;height:18.70px"></div>
<div class="a hl" style="left:566px;top:434.39px;width:218.7px;height:18.70px"></div>
<div class="a hl" style="left:566px;top:453.06px;width:201.8px;height:18.70px"></div>
<div class="a hl" style="left:566px;top:471.73px;width:84.1px;height:18.70px"></div>
<div class="a hl" style="left:566px;top:490.40px;width:109.3px;height:18.70px"></div>
<div class="a hl" style="left:566px;top:509.07px;width:210.2px;height:18.70px"></div>
<div class="a hl" style="left:566px;top:527.74px;width:210.3px;height:18.70px"></div>
<div class="code" style="top:117.10px"><span class="c">-- Query to report revenue across regions for the last 12 months</span></div>
<div class="ln" style="top:117.10px">1</div>
<div class="code" style="top:135.82px"><span class="k">SELECT</span></div>
<div class="ln" style="top:135.82px">2</div>
<div class="code" style="top:154.54px">    st<span class="o">.</span><span class="k">Name</span> <span class="k">AS</span> Region<span class="o">,</span></div>
<div class="ln" style="top:154.54px">3</div>
<div class="code" style="top:173.26px">    st<span class="o">.</span><span class="k">Group</span> <span class="k">AS</span> RegionGroup<span class="o">,</span></div>
<div class="ln" style="top:173.26px">4</div>
<div class="code" style="top:191.98px">    <span class="f">MONTH</span><span class="o">(</span>soh<span class="o">.</span>OrderDate<span class="o">)</span> <span class="k">AS</span> <span class="f">Month</span><span class="o">,</span></div>
<div class="ln" style="top:191.98px">5</div>
<div class="code" style="top:210.70px">    <span class="f">YEAR</span><span class="o">(</span>soh<span class="o">.</span>OrderDate<span class="o">)</span> <span class="k">AS</span> <span class="f">Year</span><span class="o">,</span></div>
<div class="ln" style="top:210.70px">6</div>
<div class="code" style="top:229.42px">    <span class="f">SUM</span><span class="o">(</span>soh<span class="o">.</span>TotalDue<span class="o">)</span> <span class="k">AS</span> Revenue</div>
<div class="ln" style="top:229.42px">7</div>
<div class="code" style="top:248.14px"><span class="k">FROM</span></div>
<div class="ln" style="top:248.14px">8</div>
<div class="code" style="top:266.86px">    Sales<span class="o">.</span>SalesOrderHeader soh</div>
<div class="ln" style="top:266.86px">9</div>
<div class="code" style="top:285.58px"><span class="o">JOIN</span></div>
<div class="ln" style="top:285.58px">10</div>
<div class="code" style="top:304.30px">    Sales<span class="o">.</span>SalesTerritory st <span class="k">ON</span> soh<span class="o">.</span>TerritoryID <span class="o">=</span> st<span class="o">.</span>TerritoryID</div>
<div class="ln" style="top:304.30px">11</div>
<div class="code" style="top:323.02px"><span class="k">WHERE</span></div>
<div class="ln" style="top:323.02px">12</div>
<div class="code" style="top:341.74px">    soh<span class="o">.</span>OrderDate <span class="o">&gt;=</span> <span class="f">DATEADD</span><span class="o">(</span><span class="f">month</span><span class="o">,</span> <span class="o">-</span>12<span class="o">,</span> <span class="f">GETDATE</span><span class="o">())</span></div>
<div class="ln" style="top:341.74px">13</div>
<div class="code" style="top:360.46px">    <span class="o">AND</span> soh<span class="o">.</span>OrderDate <span class="o">&lt;</span> <span class="f">GETDATE</span><span class="o">()</span></div>
<div class="ln" style="top:360.46px">14</div>
<div class="code" style="top:379.18px"><span class="k">GROUP BY</span></div>
<div class="ln" style="top:379.18px">15</div>
<div class="code" style="top:397.90px">    st<span class="o">.</span><span class="k">Name</span><span class="o">,</span></div>
<div class="ln" style="top:397.90px">16</div>
<div class="code" style="top:416.62px">    st<span class="o">.</span><span class="k">Group</span><span class="o">,</span></div>
<div class="ln" style="top:416.62px">17</div>
<div class="code" style="top:435.34px">    <span class="f">MONTH</span><span class="o">(</span>soh<span class="o">.</span>OrderDate<span class="o">),</span></div>
<div class="ln" style="top:435.34px">18</div>
<div class="code" style="top:454.06px">    <span class="f">YEAR</span><span class="o">(</span>soh<span class="o">.</span>OrderDate<span class="o">)</span></div>
<div class="ln" style="top:454.06px">19</div>
<div class="code" style="top:472.78px"><span class="k">ORDER BY</span></div>
<div class="ln" style="top:472.78px">20</div>
<div class="code" style="top:491.50px">    st<span class="o">.</span><span class="k">Name</span><span class="o">,</span></div>
<div class="ln" style="top:491.50px">21</div>
<div class="code" style="top:510.22px">    <span class="f">YEAR</span><span class="o">(</span>soh<span class="o">.</span>OrderDate<span class="o">),</span></div>
<div class="ln" style="top:510.22px">22</div>
<div class="code" style="top:528.94px">    <span class="f">MONTH</span><span class="o">(</span>soh<span class="o">.</span>OrderDate<span class="o">);</span></div>
<div class="ln" style="top:528.94px;color:#000">23</div>
<!-- ===== TABS TEXT ===== -->
<div class="t" style="left:457.10px;top:95.23px;font-size:12px;letter-spacing:-0.185px;font-weight:bold;color:#1E1E1E">SQLQuery1.sq...\adams (80))*</div>
<svg style="left:630px;top:103px" width="9" height="7" viewBox="0 0 9 7" fill="none" stroke="#333"><path d="M0 3.5H3" stroke-width="1"/><rect x="3.5" y="1" width="4.5" height="4.5" stroke-width="1"/><path d="M3.5 0V7" stroke-width="1"/></svg>
<svg style="left:648px;top:102px" width="10" height="8" viewBox="0 0 10 8"><path d="M0.4 0.2L9.6 7.8M9.6 0.2L0.4 7.8" stroke="#5A3A1E" stroke-width="1.2"/></svg>
<div class="t" style="left:668.00px;top:94.97px;font-size:11.88px;letter-spacing:-0.250px;color:#FFFFFF">SQLQuery2.sql...C\adams (74))</div>
<div class="t" style="left:878.00px;top:94.96px;font-size:11.92px;letter-spacing:-0.254px;color:#FFFFFF">SQLQuery1.sq...C\adams (72))*</div>
<div class="t" style="left:1090.50px;top:94.93px;font-size:12px;letter-spacing:-0.123px;color:#FFFFFF">k3gupum5..sql...C\adams (70))</div>
<div class="t" style="left:1301.25px;top:94.93px;font-size:12px;letter-spacing:-0.148px;color:#FFFFFF">vi2tecpv..sql...PC\adams (69))</div>
<div class="t" style="left:1506.25px;top:95.03px;font-size:11.7px;letter-spacing:-0.250px;color:#FFFFFF">PUR_vnext_v3(...C\adams (68))</div>
<svg style="left:1885px;top:104px" width="9" height="5" viewBox="0 0 9 5"><path d="M0 0H8L4 4.5Z" fill="#D6DEEE"/></svg>
<svg style="left:1901px;top:99px" width="12" height="12" viewBox="0 0 12 12"><g fill="#D6DEEE"><circle cx="6" cy="6" r="4"/><g stroke="#D6DEEE" stroke-width="2.2"><path d="M6 0.3V11.7M0.3 6H11.7M2 2L10 10M10 2L2 10"/></g></g><circle cx="6" cy="6" r="1.6" fill="#4A6188"/></svg>

<!-- ===== SCROLLBAR ===== -->
<div class="a" style="left:1894px;top:139px;width:19px;height:824px;background:#E4E5EA"></div>
<div class="a" style="left:1894px;top:117px;width:19px;height:22px;background:#E3EAF9;border-left:1px solid #8CA2CC;border-bottom:1px solid #8CA2CC"></div>
<svg style="left:1897px;top:121px" width="13" height="14" viewBox="0 0 13 14"><path d="M1 5.5H12M1 7.5H12" stroke="#1E1E1E" stroke-width="1.1"/><path d="M6.5 1.5V4.5M6.5 8.5V12" stroke="#1E1E1E" stroke-width="1"/><path d="M4.5 2.6L6.5 0.4L8.5 2.6ZM4.5 11L6.5 13.2L8.5 11Z" fill="#1E1E1E"/></svg>
<svg style="left:1899px;top:145px" width="9" height="5" viewBox="0 0 9 5"><path d="M0 5H9L4.5 0Z" fill="#6E7388"/></svg>
<div class="a" style="left:1898px;top:156px;width:11px;height:527px;background:#BBBCC2"></div>
<svg style="left:1894px;top:156px" width="9" height="268" viewBox="0 0 9 268"><path d="M2 0V262Q2 266 4 266Q6 266 6 262V0" fill="none" stroke="#C2A55A" stroke-width="2"/></svg>
<div class="a" style="left:1894px;top:413px;width:19px;height:2px;background:#0000CC"></div>
<svg style="left:1899px;top:951px" width="9" height="5" viewBox="0 0 9 5"><path d="M0 0H9L4.5 5Z" fill="#6E7388"/></svg>

<!-- ===== EDITOR STATUS STRIP ===== -->
<div class="a" style="left:453px;top:963px;width:60px;height:16px;background:#EEF2FA;border:1px solid #6E7F9C"></div>
<div class="t" style="left:455.70px;top:960.83px;font-size:11.4px;letter-spacing:-0.575px;color:#1E1E1E">110 %</div>
<svg style="left:504px;top:969px" width="7" height="4" viewBox="0 0 7 4"><path d="M0 0H6.5L3.25 3.5Z" fill="#1E1E1E"/></svg>
<svg style="left:537px;top:965px" width="11" height="11" viewBox="0 0 11 11"><circle cx="5.5" cy="5.5" r="5.5" fill="#137A2E"/><path d="M2.8 5.6L4.7 7.4L8.2 3.8" fill="none" stroke="#fff" stroke-width="1.3"/></svg>
<div class="t" style="left:553.60px;top:960.63px;font-size:12px;letter-spacing:-0.221px">No issues found</div>
<svg style="left:713px;top:966px" width="5" height="9" viewBox="0 0 5 9"><path d="M5 0V9L0 4.5Z" fill="#C4C6CE"/></svg>
<svg style="left:1707px;top:966px" width="5" height="9" viewBox="0 0 5 9"><path d="M0 0V9L5 4.5Z" fill="#C4C6CE"/></svg>
<div class="t" style="left:1739.80px;top:961.53px;font-size:11.4px;letter-spacing:-0.340px">Ln: 23</div>
<div class="t" style="left:1788.20px;top:961.53px;font-size:11.4px;letter-spacing:-0.380px">Ch: 26</div>
<div class="t" style="left:1838.60px;top:961.53px;font-size:11.4px;letter-spacing:-2.200px">SPC</div>
<div class="t" style="left:1878.00px;top:961.53px;font-size:11.4px;letter-spacing:-1.667px">CRLF</div>

<!-- ===== YELLOW STATUS ===== -->
<svg style="left:456px;top:982px" width="16" height="16" viewBox="0 0 16 16"><g fill="#2A2A2A"><rect x="1.2" y="0" width="1.8" height="3.3"/><rect x="5" y="0" width="1.8" height="3.3"/><rect x="0" y="4" width="8" height="1.3"/><rect x="1" y="4" width="6" height="5.5"/><rect x="3" y="9" width="2" height="6"/></g><circle cx="10.8" cy="11.5" r="4" fill="#19A03A" stroke="#F2E08B" stroke-width="0.8"/><path d="M8.8 11.5L10.3 13L12.8 10.2" fill="none" stroke="#fff" stroke-width="1.1"/></svg>
<div class="t" style="left:476.60px;top:979.93px;font-size:12px;letter-spacing:-0.060px">Connected. (1/1)</div>
<div class="a" style="left:1318px;top:983px;width:1px;height:14px;background:#A89A5C"></div>
<svg style="left:1324px;top:983px" width="11" height="14" viewBox="0 0 11 14"><path d="M2.5 6V4Q2.5 1 5.5 1Q8.5 1 8.5 4V6" fill="none" stroke="#1E1E1E" stroke-width="1.5"/><rect x="0.5" y="6" width="10" height="8" rx="1" fill="#1E1E1E"/><circle cx="5.5" cy="10" r="1" fill="#F2E08B"/></svg>
<div class="t" style="left:1340.40px;top:980.43px;font-size:11.4px;letter-spacing:-0.372px">ADAMS-PC\SQLEXPRESS (16.0 RTM)</div>
<div class="a" style="left:1538px;top:983px;width:1px;height:14px;background:#A89A5C"></div>
<div class="t" style="left:1544.40px;top:980.23px;font-size:12px;letter-spacing:-0.239px">ADAMS-PC\adams (80)</div>
<div class="a" style="left:1676px;top:983px;width:1px;height:14px;background:#A89A5C"></div>
<div class="t" style="left:1681.70px;top:980.23px;font-size:12px;letter-spacing:-0.229px">AdventureWorks2022</div>
<div class="a" style="left:1800px;top:983px;width:1px;height:14px;background:#A89A5C"></div>
<div class="t" style="left:1806.30px;top:980.43px;font-size:11.4px;letter-spacing:-0.386px">00:00:00</div>
<div class="a" style="left:1855px;top:983px;width:1px;height:14px;background:#A89A5C"></div>
<div class="t" style="left:1861.20px;top:980.28px;font-size:11.85px;letter-spacing:-0.260px">0 rows</div>

<!-- ===== BOTTOM STATUS ===== -->
<div class="a" style="left:0;top:1032px;width:1920px;height:1px;background:#4A3A3A"></div>
<svg style="left:4px;top:1011px" width="17" height="17" viewBox="0 0 17 17"><path d="M0.6 1.3H15.6V13.6H11L8 16.4L5 13.6H0.6Z" fill="#3F5088" stroke="#FFFFFF" stroke-width="1.1"/></svg>
<div class="t" style="left:28.50px;top:1009.73px;font-size:11.4px;letter-spacing:-0.425px;color:#FFFFFF">Ready</div>
<svg style="left:1888px;top:1011px" width="22" height="22" viewBox="0 0 22 22"><path d="M3.2 14.6V7.3Q3.2 2.4 7.9 2.4Q12.6 2.4 12.6 7.3V12" fill="#45558A" stroke="#FFFFFF" stroke-width="1.1"/><path d="M2.6 14.6H10M6.5 15.2Q7 16.4 8 16.6" fill="none" stroke="#FFFFFF" stroke-width="1.1"/><circle cx="15.1" cy="13.9" r="5.9" fill="#EE1A10"/><path d="M13.8 11.6L15.4 10.8V17.6" stroke="#FFF8C0" stroke-width="1.2" fill="none"/></svg>

<!-- ===== PROMPT AI DIALOG ===== -->
<div class="a" style="left:857px;top:384px;width:520px;height:218px;background:#FFFFFF;border:1px solid #8C8C8C"></div>
<div class="t" style="left:864.40px;top:386.93px;font-size:12px;letter-spacing:0.013px;color:#1E1E1E">Prompt AI</div>
<div class="t" style="left:930.00px;top:386.93px;font-size:12px;letter-spacing:-0.067px;color:#1E1E1E">History</div>
<div class="a" style="left:858px;top:407px;width:66px;height:3px;background:#4372D0"></div>
<svg style="left:1355px;top:394px" width="11" height="11" viewBox="0 0 11 11"><path d="M0.5 0.5L10.5 10.5M10.5 0.5L0.5 10.5" stroke="#333" stroke-width="1.2"/></svg>
<div class="a" style="left:862px;top:414px;width:510px;height:183px;background:#EBEBEB"></div>
<div class="a" style="left:867px;top:419px;width:502px;height:49px;background:#FFFFFF;border:1.5px solid #18579A"></div>
<div class="t" style="left:877.00px;top:434.95px;font-size:14.38px;letter-spacing:-0.250px;color:#8E8E8E">Ask Prompt AI to edit SQL</div>
<svg style="left:1321px;top:436px" width="15" height="16" viewBox="0 0 15 16"><path d="M0 0L15 8L0 16Z" fill="#0F5291"/></svg>
<svg style="left:1344px;top:435px" width="18" height="18" viewBox="0 0 18 18"><path d="M2 8.5A7 7 0 0 1 15.2 6" fill="none" stroke="#555" stroke-width="1.6"/><path d="M16 8.8A7 7 0 0 1 2.8 11.5" fill="none" stroke="#555" stroke-width="1.6"/><path d="M16.5 2.2V6.8H12" fill="none" stroke="#555" stroke-width="1.5"/><path d="M1.5 15.5V11H6" fill="none" stroke="#555" stroke-width="1.5"/></svg>
<svg style="left:868px;top:483px" width="9" height="10" viewBox="0 0 9 10"><g fill="#1A5A94"><ellipse cx="4.5" cy="1.6" rx="4.2" ry="1.6"/><path d="M0.3 2.6Q4.5 4.6 8.7 2.6V4.6Q4.5 6.6 0.3 4.6Z"/><path d="M0.3 5.6Q4.5 7.6 8.7 5.6V8Q4.5 10 0.3 8Z"/></g></svg>
<div class="t" style="left:883.30px;top:478.77px;font-size:11.89px;letter-spacing:-0.253px;font-weight:bold;color:#1D5E9E">AdventureWorks2022</div>
<div class="a" style="left:1249px;top:483px;width:83px;height:18px;background:#1778D4;border-radius:4px"></div>
<div class="t" style="left:1258.70px;top:483.03px;font-size:11.4px;letter-spacing:-0.350px;font-weight:bold;color:#FFFFFF">Explain SQL</div>
<svg style="left:1347px;top:484px" width="16" height="16" viewBox="0 0 16 16"><circle cx="8" cy="8" r="8" fill="#636363"/><path d="M5.6 6Q5.6 3.5 8 3.5Q10.4 3.5 10.4 5.8Q10.4 7.2 8.8 8Q8 8.5 8 9.8" fill="none" stroke="#fff" stroke-width="1.6"/><circle cx="8" cy="12.2" r="1" fill="#fff"/></svg>
<div class="t" style="left:873.90px;top:518.81px;font-size:14.5px;letter-spacing:-0.218px;color:#1F4E79">And include only the top 5 regions by revenue</div>
<div class="a" style="left:868px;top:567px;width:76px;height:24px;background:#0F4C8A;border-radius:3px"></div>
<div class="t" style="left:884.30px;top:570.65px;font-size:13.45px;letter-spacing:-0.240px;font-weight:bold;color:#FFFFFF">Accept</div>
<div class="a" style="left:955px;top:567px;width:78px;height:24px;background:#D6D6D6;border-radius:3px"></div>
<div class="t" style="left:970.90px;top:570.65px;font-size:13.47px;letter-spacing:-0.250px;font-weight:bold;color:#1E1E1E">Decline</div>

</body></html>
